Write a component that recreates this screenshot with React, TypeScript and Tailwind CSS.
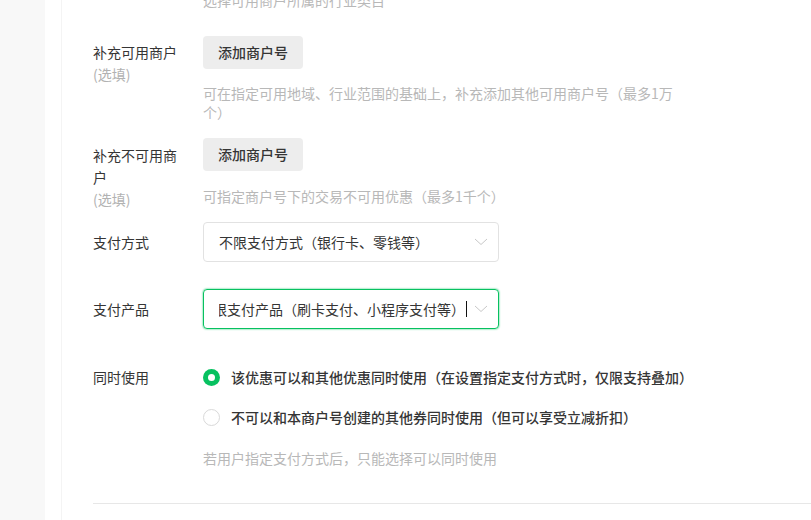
const FONT = "font-['Noto_Sans_CJK_SC','Noto_Sans',sans-serif]";

function Label({ lines, optional }: { lines: string[]; optional?: boolean }) {
  return (
    <div className="w-[90px] mr-[20px] shrink-0 text-[14px] leading-[22px] text-[#353535]">
      {lines.map((l) => (
        <div key={l}>{l}</div>
      ))}
      {optional && <div className="text-[#b2b2b2]">(选填)</div>}
    </div>
  );
}

function Help({ children }: { children: React.ReactNode }) {
  return <p className="text-[14px] leading-[19px] text-[#b8b8b8]">{children}</p>;
}

function AddButton() {
  return (
    <button
      type="button"
      className="h-[33px] px-[15px] rounded-[4px] bg-[#ededed] text-[14px] font-medium text-[#353535]"
    >
      添加商户号
    </button>
  );
}

function Chevron() {
  return (
    <svg width="14" height="8" viewBox="0 0 14 8" className="shrink-0">
      <polyline points="1,1 7,6.5 13,1" fill="none" stroke="#c8c8c8" strokeWidth="1" />
    </svg>
  );
}

export default function App() {
  return (
    <div className={`flex h-[520px] w-[811px] overflow-hidden bg-white ${FONT}`}>
      <div className="w-[45px] shrink-0 bg-[#f8f8f8]" />
      <div className="w-[17px] shrink-0 border-r border-[#f4f4f4]" />
      <div className="flex-1 pl-[31px]">
        <div className="-mt-[9px] ml-[110px]">
          <Help>选择可用商户所属的行业类目</Help>
        </div>

        <div className="flex mt-[26px]">
          <div className="pt-[5px]">
            <Label lines={["补充可用商户"]} optional />
          </div>
          <div className="w-[480px]">
            <AddButton />
            <div className="mt-[15px]">
              <Help>可在指定可用地域、行业范围的基础上，补充添加其他可用商户号（最多1万个）</Help>
            </div>
          </div>
        </div>

        <div className="flex mt-[16px]">
          <div className="pt-[6px]">
            <Label lines={["补充不可用商", "户"]} optional />
          </div>
          <div className="w-[480px]">
            <AddButton />
            <div className="mt-[16px]">
              <Help>可指定商户号下的交易不可用优惠（最多1千个）</Help>
            </div>
          </div>
        </div>

        <div className="flex items-center mt-[12px]">
          <Label lines={["支付方式"]} />
          <div className="flex items-center h-[40px] w-[296px] rounded-[4px] border border-[#e2e2e2] pl-[15px] pr-[10px]">
            <span className="flex-1 text-[14px] text-[#353535] whitespace-nowrap">不限支付方式（银行卡、零钱等）</span>
            <Chevron />
          </div>
        </div>

        <div className="flex items-center mt-[27px]">
          <Label lines={["支付产品"]} />
          <div className="flex items-center h-[40px] w-[296px] rounded-[4px] border border-[#07c160] shadow-[0_0_2px_#07c160] pl-[15px] pr-[10px]">
            <div className="flex-1 flex justify-end overflow-hidden mr-[7px]">
              <span className="text-[14px] text-[#353535] whitespace-nowrap">不限支付产品（刷卡支付、小程序支付等）</span>
              <span className="ml-px w-px h-[16px] bg-[#111] self-center shrink-0" />
            </div>
            <Chevron />
          </div>
        </div>

        <div className="flex mt-[37px]">
          <Label lines={["同时使用"]} />
          <div>
            <div className="flex items-center h-[22px]">
              <span className="w-[17px] h-[17px] rounded-full bg-[#07c160] flex items-center justify-center">
                <span className="w-[7px] h-[7px] rounded-full bg-white" />
              </span>
              <span className="ml-[11px] text-[14px] font-medium text-[#353535]">
                该优惠可以和其他优惠同时使用（在设置指定支付方式时，仅限支持叠加）
              </span>
            </div>
            <div className="flex items-center h-[22px] mt-[18px]">
              <span className="w-[17px] h-[17px] rounded-full border border-[#d9d9d9]" />
              <span className="ml-[11px] text-[14px] font-medium text-[#353535]">
                不可以和本商户号创建的其他券同时使用（但可以享受立减折扣）
              </span>
            </div>
            <div className="mt-[21px]">
              <Help>若用户指定支付方式后，只能选择可以同时使用</Help>
            </div>
          </div>
        </div>

        <div className="mt-[35px] border-t border-[#e7e7e7]" />
      </div>
    </div>
  );
}
